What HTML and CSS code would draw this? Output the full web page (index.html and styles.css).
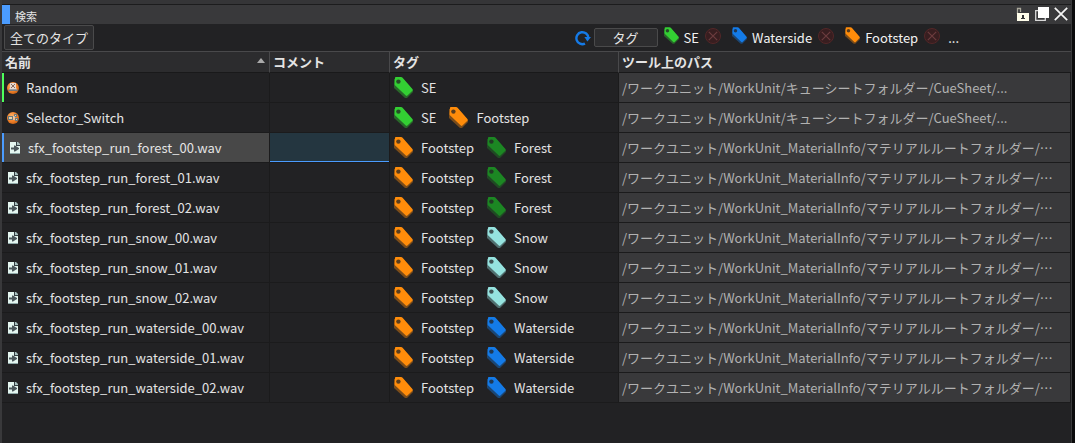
FILE: index.html
```html
<!DOCTYPE html>
<html lang="ja">
<head>
<meta charset="utf-8">
<title>検索</title>
<link rel="stylesheet" href="styles.css">
</head>
<body>
<svg class="defs" aria-hidden="true">
  <symbol id="tag" viewBox="0 0 19 21">
    <path class="tag-shade" d="M0 2 L9 2 L19 13 L19 15 L13 21 L11 21 L0 11 Z"/>
    <path class="tag-face" d="M1 .5 Q1 0 2 0 H7 Q8 0 8.6 .8 L18.4 12 Q19 13 18.4 13.8 L13.4 18.6 Q12.6 19.2 11.8 18.6 L1.2 8.6 Q.6 8 .6 7 Z"/>
    <circle class="tag-hole" cx="4.4" cy="4.6" r="2.2"/>
  </symbol>
  <symbol id="wav" viewBox="0 0 12 14">
    <path fill="#e4f6f0" d="M1 1h6l4 4v8H1z"/>
    <path fill="#354044" d="M7 1h1v3h3v1H7z"/>
    <path fill="#a9c0bf" d="M8 1h1l2 2v1H8z"/>
    <path fill="#4b575b" d="M2 6.5h3V4.5h1l4 2.5v1l-4 2.5H5v-2H2z"/>
    <path fill="#8fa9a8" d="M1 12h10v1H1z"/>
  </symbol>
  <symbol id="drop" viewBox="0 0 16 16">
    <circle cx="8" cy="8" r="7.5" fill="#381e20" stroke="#532728"/>
    <path d="M3.8 3.8l8.4 8.4M12.2 3.8l-8.4 8.4" stroke="#6c3c3e" stroke-width="1.2"/>
  </symbol>
  <radialGradient id="ball" cx=".4" cy=".35" r=".65"><stop offset="0" stop-color="#ffb26a"/><stop offset=".7" stop-color="#ee7d25"/><stop offset="1" stop-color="#c9661b"/></radialGradient>
  <symbol id="random" viewBox="0 0 12 12">
    <circle cx="6" cy="6" r="6" fill="url(#ball)"/>
    <path d="M3 1h6v6H3z" fill="#e9d8cc"/>
    <path d="M4 2l4 4M8 2L4 6" stroke="#6b5044" stroke-width=".8"/>
    <path d="M2 7h8l1 2H1z" fill="#777a7c"/>
    <path d="M2 7h8" stroke="#dedede" stroke-width=".7"/>
  </symbol>
  <symbol id="selector" viewBox="0 0 12 12">
    <circle cx="6" cy="6" r="6" fill="url(#ball)"/>
    <path d="M1 4h5v4H1zM7 2h3v3H7zM8 6h3v3H8z" fill="#6b7a7e"/>
    <path d="M2 5h3v2H2zM8 3h1v1H8zM9 7h1v1H9z" fill="#e6d3aa"/>
    <path d="M6 5h2M6 7h2" stroke="#e9eef0"/>
  </symbol>
</svg>
<div class="frame">
<main class="panel">
  <header class="titlebar">
    <h1 class="title">検索</h1>
    <div class="window-buttons">
      <button class="icon-button" aria-label="ロック"><svg width="14" height="15" viewBox="0 0 14 15"><path d="M1.5 7V1.5h3V5" fill="none" stroke="#aaa89b" stroke-width="1.3"/><path d="M1 6h12v8H1z" fill="#fffdea"/><path d="M6 8h2v3h1v1H5v-1h1z" fill="#333"/></svg></button>
      <button class="icon-button" aria-label="ウィンドウ"><svg width="14" height="15" viewBox="0 0 14 15"><path d="M3 3.7H.7v9.6h9.6V11" fill="none" stroke="#d8d8d8" stroke-width="1.3"/><path d="M3 0h11v11H3z" fill="#fff"/></svg></button>
      <button class="icon-button" aria-label="閉じる"><svg width="14" height="15" viewBox="0 0 14 15"><path d="M.8.8l12.4 12.4M13.2.8L.8 13.2" stroke="#f5f5f5" stroke-width="1.7"/></svg></button>
    </div>
  </header>
  <div class="toolbar">
    <button class="type-button">全てのタイプ</button>
    <div class="filters">
      <button class="icon-button" aria-label="更新"><svg width="16" height="16" viewBox="0 0 16 16"><path d="M10 13.6A6 6 0 1 1 13.4 8" fill="none" stroke="#157ae6" stroke-width="2.4"/><path d="M9.4 7H16l-3.6 4.6z" fill="#157ae6"/></svg></button>
      <button class="tag-button">タグ</button>
      <span class="chip"><svg class="tag-small green"><use href="#tag"/></svg>SE<button class="icon-button drop" aria-label="SEを解除"><svg width="16" height="16"><use href="#drop"/></svg></button></span>
      <span class="chip"><svg class="tag-small blue"><use href="#tag"/></svg>Waterside<button class="icon-button drop" aria-label="Watersideを解除"><svg width="16" height="16"><use href="#drop"/></svg></button></span>
      <span class="chip"><svg class="tag-small orange"><use href="#tag"/></svg>Footstep<button class="icon-button drop" aria-label="Footstepを解除"><svg width="16" height="16"><use href="#drop"/></svg></button></span>
      <span class="more">...</span>
    </div>
  </div>
  <table class="results">
    <colgroup><col class="col-name"><col class="col-comment"><col class="col-tags"><col></colgroup>
    <thead><tr>
      <th><div class="sort">名前<svg width="8" height="5" viewBox="0 0 8 5"><path d="M0 5L4 0l4 5z" fill="#aaa"/></svg></div></th>
      <th>コメント</th><th>タグ</th><th>ツール上のパス</th>
    </tr></thead>
    <tbody>
      <tr class="marked"><td><div class="name"><svg class="cue"><use href="#random"/></svg>Random</div></td><td></td><td><div class="tags"><span class="tag"><svg class="tag-icon green"><use href="#tag"/></svg>SE</span></div></td><td class="path">/ワークユニット/WorkUnit/キューシートフォルダー/CueSheet/...</td></tr>
      <tr><td><div class="name"><svg class="cue"><use href="#selector"/></svg>Selector_Switch</div></td><td></td><td><div class="tags"><span class="tag"><svg class="tag-icon green"><use href="#tag"/></svg>SE</span><span class="tag"><svg class="tag-icon orange"><use href="#tag"/></svg>Footstep</span></div></td><td class="path">/ワークユニット/WorkUnit/キューシートフォルダー/CueSheet/...</td></tr>
      <tr class="selected"><td><div class="name"><svg class="file"><use href="#wav"/></svg>sfx_footstep_run_forest_00.wav</div></td><td></td><td><div class="tags"><span class="tag"><svg class="tag-icon orange"><use href="#tag"/></svg>Footstep</span><span class="tag"><svg class="tag-icon forest"><use href="#tag"/></svg>Forest</span></div></td><td class="path">/ワークユニット/WorkUnit_MaterialInfo/マテリアルルートフォルダー/⋯</td></tr>
      <tr><td><div class="name"><svg class="file"><use href="#wav"/></svg>sfx_footstep_run_forest_01.wav</div></td><td></td><td><div class="tags"><span class="tag"><svg class="tag-icon orange"><use href="#tag"/></svg>Footstep</span><span class="tag"><svg class="tag-icon forest"><use href="#tag"/></svg>Forest</span></div></td><td class="path">/ワークユニット/WorkUnit_MaterialInfo/マテリアルルートフォルダー/⋯</td></tr>
      <tr><td><div class="name"><svg class="file"><use href="#wav"/></svg>sfx_footstep_run_forest_02.wav</div></td><td></td><td><div class="tags"><span class="tag"><svg class="tag-icon orange"><use href="#tag"/></svg>Footstep</span><span class="tag"><svg class="tag-icon forest"><use href="#tag"/></svg>Forest</span></div></td><td class="path">/ワークユニット/WorkUnit_MaterialInfo/マテリアルルートフォルダー/⋯</td></tr>
      <tr><td><div class="name"><svg class="file"><use href="#wav"/></svg>sfx_footstep_run_snow_00.wav</div></td><td></td><td><div class="tags"><span class="tag"><svg class="tag-icon orange"><use href="#tag"/></svg>Footstep</span><span class="tag"><svg class="tag-icon snow"><use href="#tag"/></svg>Snow</span></div></td><td class="path">/ワークユニット/WorkUnit_MaterialInfo/マテリアルルートフォルダー/⋯</td></tr>
      <tr><td><div class="name"><svg class="file"><use href="#wav"/></svg>sfx_footstep_run_snow_01.wav</div></td><td></td><td><div class="tags"><span class="tag"><svg class="tag-icon orange"><use href="#tag"/></svg>Footstep</span><span class="tag"><svg class="tag-icon snow"><use href="#tag"/></svg>Snow</span></div></td><td class="path">/ワークユニット/WorkUnit_MaterialInfo/マテリアルルートフォルダー/⋯</td></tr>
      <tr><td><div class="name"><svg class="file"><use href="#wav"/></svg>sfx_footstep_run_snow_02.wav</div></td><td></td><td><div class="tags"><span class="tag"><svg class="tag-icon orange"><use href="#tag"/></svg>Footstep</span><span class="tag"><svg class="tag-icon snow"><use href="#tag"/></svg>Snow</span></div></td><td class="path">/ワークユニット/WorkUnit_MaterialInfo/マテリアルルートフォルダー/⋯</td></tr>
      <tr><td><div class="name"><svg class="file"><use href="#wav"/></svg>sfx_footstep_run_waterside_00.wav</div></td><td></td><td><div class="tags"><span class="tag"><svg class="tag-icon orange"><use href="#tag"/></svg>Footstep</span><span class="tag"><svg class="tag-icon blue"><use href="#tag"/></svg>Waterside</span></div></td><td class="path">/ワークユニット/WorkUnit_MaterialInfo/マテリアルルートフォルダー/⋯</td></tr>
      <tr><td><div class="name"><svg class="file"><use href="#wav"/></svg>sfx_footstep_run_waterside_01.wav</div></td><td></td><td><div class="tags"><span class="tag"><svg class="tag-icon orange"><use href="#tag"/></svg>Footstep</span><span class="tag"><svg class="tag-icon blue"><use href="#tag"/></svg>Waterside</span></div></td><td class="path">/ワークユニット/WorkUnit_MaterialInfo/マテリアルルートフォルダー/⋯</td></tr>
      <tr><td><div class="name"><svg class="file"><use href="#wav"/></svg>sfx_footstep_run_waterside_02.wav</div></td><td></td><td><div class="tags"><span class="tag"><svg class="tag-icon orange"><use href="#tag"/></svg>Footstep</span><span class="tag"><svg class="tag-icon blue"><use href="#tag"/></svg>Waterside</span></div></td><td class="path">/ワークユニット/WorkUnit_MaterialInfo/マテリアルルートフォルダー/⋯</td></tr>
    </tbody>
  </table>
</main>
</div>
</body>
</html>
```

FILE: styles.css
```css
* { box-sizing: border-box; }
body {
  margin: 0;
  background: #0b0b0c;
  color: #e4e4e4;
  font: 13px/20px "Noto Sans CJK JP", sans-serif;
}
button { font: inherit; color: inherit; }
svg { display: block; flex: none; }
.defs { position: absolute; width: 0; height: 0; }
.frame {
  min-height: 100vh;
  margin-right: 3px;
  padding-top: 4px;
  border-left: 2px solid #39393b;
  border-right: 1px solid #39393b;
  background: #353537;
  display: flex;
}
.panel {
  flex: 1;
  min-width: 0;
  border-top: 1px solid #1c1c1d;
  background: #222224;
}
.titlebar {
  display: flex;
  align-items: center;
  justify-content: space-between;
  height: 19px;
  padding-right: 3px;
  border-left: 8px solid #4b9cff;
  background: #39393b;
}
.title {
  margin: 0;
  padding: 2px 0 0 5px;
  font-size: 11px;
  line-height: 16px;
  font-weight: 400;
}
.window-buttons { display: flex; gap: 5px; }
.icon-button {
  padding: 0;
  border: 0;
  background: none;
  flex: none;
}
.toolbar {
  display: flex;
  align-items: center;
  justify-content: space-between;
  height: 27px;
  padding: 0 112px 0 2px;
}
.type-button, .tag-button {
  border: 1px solid #4a4a4b;
  border-radius: 2px;
  background: #2d2d2f;
}
.type-button { height: 25px; padding: 0 5px; line-height: 22px; }
.tag-button {
  width: 64px;
  height: 19px;
  margin: 0 6px 0 3px;
  padding: 0;
  line-height: 16px;
}
.filters { display: flex; align-items: center; white-space: nowrap; }
.chip { display: flex; align-items: center; margin-right: 11px; color: #f2f2f2; }
.chip:nth-last-child(2) { margin-right: 8px; }
.drop { margin: 0 0 3px 6px; }
.more { color: #f2f2f2; }
.tag-small { width: 15px; height: 17px; margin: 0 5px 4px 0; }
.tag-icon { width: 19px; height: 21px; margin-right: 8px; }
.tag-face { fill: currentColor; }
.tag-shade { fill: color-mix(in srgb, currentColor 40%, #222224); }
.tag-hole { fill: color-mix(in srgb, currentColor 25%, #222224); }
.green { color: #33cf33; }
.orange { color: #ff8c0a; }
.forest { color: #1c8723; }
.snow { color: #96e3df; }
.blue { color: #147be8; }

.results {
  width: 100%;
  table-layout: fixed;
  border-collapse: separate;
  border-spacing: 0;
}
.col-name { width: 268px; }
.col-comment { width: 120px; }
.col-tags { width: 229px; }
th {
  height: 22px;
  padding: 0 3px;
  border-top: 1px solid #49494b;
  border-right: 1px solid #49494b;
  border-bottom: 1px solid #19191a;
  background: #2c2c2e;
  line-height: 20px;
  text-align: left;
}
th:last-child { border-right: 0; }
.sort { display: flex; justify-content: space-between; }
.sort svg { margin: 6px 1px 0 0; }
td {
  height: 30px;
  padding: 0 3px;
  border-right: 1px solid #1b1b1c;
  border-bottom: 1px solid #1b1b1c;
  white-space: nowrap;
}
.name { display: flex; align-items: center; padding-left: 2px; }
.name svg { margin-right: 7px; }
.cue, .file { width: 12px; }
.cue { height: 12px; }
.file { height: 14px; }
.tags { display: flex; align-items: center; gap: 13px; padding-left: 1px; }
.tag { display: flex; align-items: center; line-height: 18px; }
.path {
  overflow: hidden;
  background: #39393b;
  color: #b2b2b2;
}
.marked td:first-child { box-shadow: inset 2px 0 #4dff5c; }
.selected td:first-child {
  padding-left: 5px;
  background: #484848;
  box-shadow: inset 2px 0 #4b9cff;
}
.selected td:nth-child(2) {
  background: #243640;
  box-shadow: inset 0 -1px #4b9cff;
}
```
